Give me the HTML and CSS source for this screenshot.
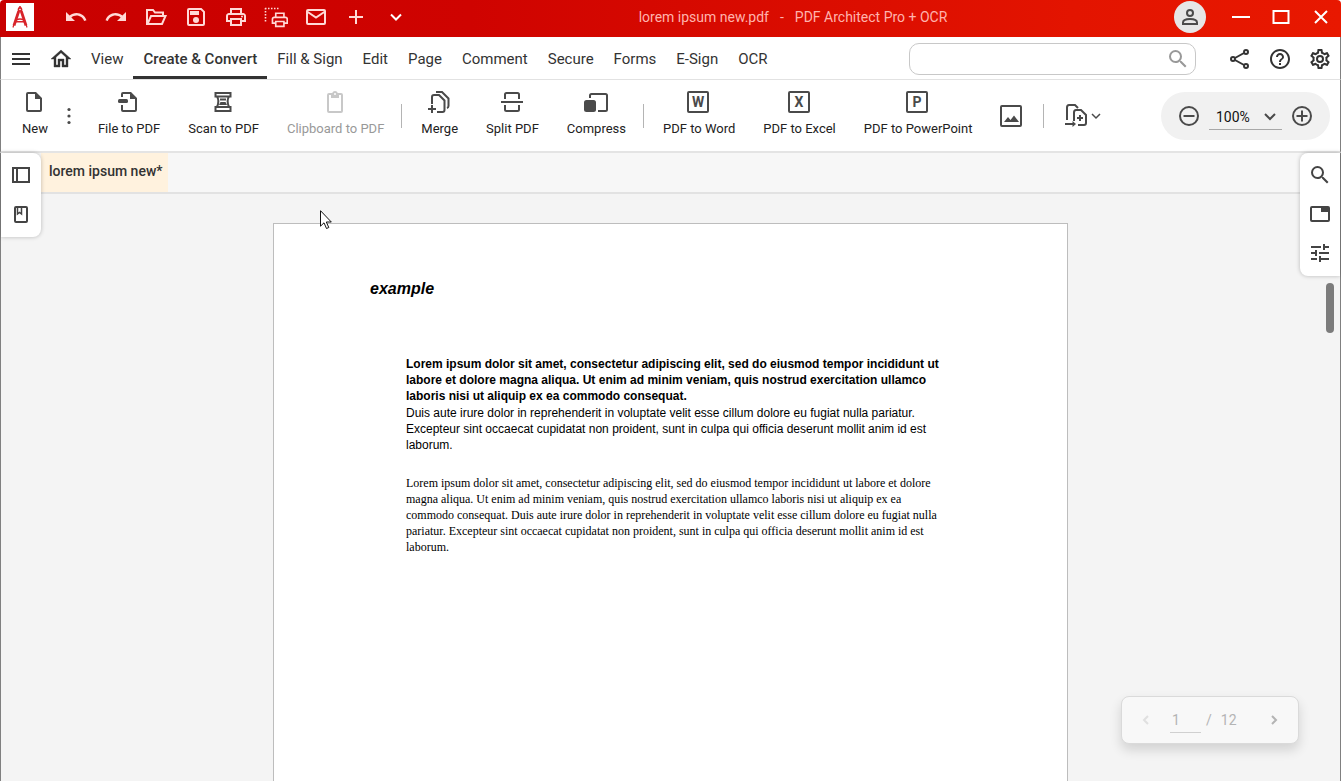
FILE: index.html
```html
<!DOCTYPE html>
<html lang="en">
<head>
<meta charset="utf-8">
<title>lorem ipsum new.pdf - PDF Architect Pro + OCR</title>
<link rel="stylesheet" href="styles.css">
</head>
<body>
<div class="window">
  <header class="titlebar">
    <svg class="logo" viewBox="0 0 28 28" aria-hidden="true">
      <rect width="28" height="28" fill="#fff"/>
      <g fill="none" stroke="#d8232a">
        <circle cx="14" cy="6.5" r="1.6" stroke-width="1.6"/>
        <path d="M14 3v2" stroke-width="1.6"/>
        <path d="M12.8 8 8 22.5M15.2 8 20 22.5" stroke-width="2.8"/>
        <path d="M7.8 21.5 7 24.5M20.2 21.5l.8 3" stroke-width="1.2"/>
        <path d="M10 17.2q4-2.4 8 0M10 18.8h8" stroke-width="1.4"/>
      </g>
    </svg>
    <div class="quick">
      <button aria-label="Undo"><svg viewBox="0 0 24 24"><path d="M12.5 8c-2.65 0-5.05.99-6.9 2.6L2 7v9h9l-3.62-3.62c1.39-1.16 3.16-1.88 5.12-1.88 3.54 0 6.55 2.31 7.6 5.5l2.37-.78C21.08 11.03 17.15 8 12.5 8z"/></svg></button>
      <button aria-label="Redo"><svg viewBox="0 0 24 24"><path d="M18.4 10.6C16.55 8.99 14.15 8 11.5 8c-4.65 0-8.58 3.03-9.96 7.22L3.9 16c1.05-3.19 4.05-5.5 7.6-5.5 1.95 0 3.73.72 5.12 1.88L13 16h9V7l-3.6 3.6z"/></svg></button>
      <button aria-label="Open"><svg viewBox="0 0 24 24" class="line"><path d="M4.500 19H3V5h6l2 2.500h8V11M3.500 19 7 11h14.500L18 19z"/></svg></button>
      <button aria-label="Save"><svg viewBox="0 0 24 24"><path fill-rule="evenodd" d="M5 3h12.500L21 6.500V19a2 2 0 0 1-2 2H5a2 2 0 0 1-2-2V5a2 2 0 0 1 2-2zm0 2v14h14V7.300L16.700 5z"/><path d="M6 6h9v4H6z"/><circle cx="12" cy="15" r="3"/></svg></button>
      <button aria-label="Print"><svg viewBox="0 0 24 24"><path fill-rule="evenodd" d="M19 8h-1V3H6v5H5c-1.660 0-3 1.340-3 3v6h4v4h12v-4h4v-6c0-1.660-1.340-3-3-3zM8 5h8v3H8V5zm8 12v2H8v-4h8v2zm2-2v-2H6v2H4v-4c0-.55.45-1 1-1h14c.55 0 1 .45 1 1v4h-2z"/><circle cx="18" cy="11.500" r="1"/></svg></button>
      <button aria-label="Print area"><svg viewBox="0 0 24 24"><path d="M1 3.500h14M1.500 3v14" fill="none" stroke="currentColor" stroke-width="1.600" stroke-dasharray="1.500 1.500"/><g transform="translate(6 5) scale(.82)"><path fill-rule="evenodd" d="M19 8h-1V3H6v5H5c-1.660 0-3 1.340-3 3v6h4v4h12v-4h4v-6c0-1.660-1.340-3-3-3zM8 5h8v3H8V5zm8 12v2H8v-4h8v2zm2-2v-2H6v2H4v-4c0-.55.45-1 1-1h14c.55 0 1 .45 1 1v4h-2z"/></g></svg></button>
      <button aria-label="Email"><svg viewBox="0 0 24 24" class="line"><rect x="3" y="5" width="18" height="14" rx="1"/><path d="m3 6.500 9 6 9-6"/></svg></button>
      <button aria-label="Add"><svg viewBox="0 0 24 24" class="line"><path d="M12 5v14M5 12h14"/></svg></button>
      <button aria-label="More commands"><svg viewBox="0 0 24 24" class="line bright"><path d="m7 9.500 5 5 5-5"/></svg></button>
    </div>
    <h1 class="title"><span>lorem ipsum new.pdf</span><span>-</span><span>PDF Architect Pro + OCR</span></h1>
    <button class="avatar" aria-label="Account"><svg viewBox="0 0 24 24"><g fill="none" stroke="currentColor" stroke-width="2"><circle cx="12" cy="8" r="3"/><path d="M5 19v-1.500C5 15 9 14 12 14s7 1 7 3.500V19z"/></g></svg></button>
    <div class="controls">
      <button aria-label="Minimize"><svg viewBox="0 0 24 24" class="line"><path d="M3 12h18"/></svg></button>
      <button aria-label="Maximize"><svg viewBox="0 0 24 24" class="line"><path d="M4.500 6h15v12h-15z"/></svg></button>
      <button aria-label="Close"><svg viewBox="0 0 24 24" class="line"><path d="m6 6 12 12M18 6 6 18"/></svg></button>
    </div>
  </header>

  <nav class="menubar">
    <button class="icon" aria-label="Menu"><svg viewBox="0 0 24 24" class="line"><path d="M3 7h18M3 12h18M3 17h18"/></svg></button>
    <button class="icon" aria-label="Home"><svg viewBox="0 0 24 24"><path d="M12 5.690l5 4.500V18h-2v-6H9v6H7v-7.810l5-4.500M12 3L2 12h3v8h6v-6h2v6h6v-8h3L12 3z" stroke="currentColor" stroke-width=".4"/></svg></button>
    <button class="menu">View</button>
    <button class="menu active">Create &amp; Convert</button>
    <button class="menu">Fill &amp; Sign</button>
    <button class="menu">Edit</button>
    <button class="menu">Page</button>
    <button class="menu">Comment</button>
    <button class="menu">Secure</button>
    <button class="menu">Forms</button>
    <button class="menu">E-Sign</button>
    <button class="menu">OCR</button>
    <label class="search">
      <input type="search" aria-label="Search commands">
      <svg viewBox="0 0 24 24"><path d="M15.500 14h-.79l-.28-.27A6.471 6.471 0 0 0 16 9.500 6.500 6.500 0 1 0 9.500 16c1.610 0 3.090-.59 4.230-1.570l.27.28v.79l5 4.990L20.490 19l-4.990-5zm-6 0C7.010 14 5 11.990 5 9.500S7.010 5 9.500 5 14 7.010 14 9.500 11.990 14 9.500 14z"/></svg>
    </label>
    <button class="icon" aria-label="Share"><svg viewBox="0 0 24 24" class="line"><circle cx="5" cy="12" r="2"/><circle cx="18" cy="5" r="2"/><circle cx="18" cy="19" r="2"/><path d="m7 11 9-5M7 13l9 5"/></svg></button>
    <button class="icon" aria-label="Help"><svg viewBox="0 0 24 24"><path fill-rule="evenodd" d="M11 18h2v-2h-2v2zm1-16C6.480 2 2 6.480 2 12s4.480 10 10 10 10-4.480 10-10S17.520 2 12 2zm0 18c-4.410 0-8-3.590-8-8s3.590-8 8-8 8 3.590 8 8-3.590 8-8 8zm0-14c-2.210 0-4 1.790-4 4h2c0-1.100.9-2 2-2s2 .9 2 2c0 2-3 1.750-3 5h2c0-2.250 3-2.500 3-5 0-2.210-1.790-4-4-4z"/></svg></button>
    <button class="icon" aria-label="Settings"><svg viewBox="0 0 24 24"><path fill-rule="evenodd" d="M19.430 12.980c.04-.32.07-.64.07-.98 0-.34-.03-.66-.07-.98l2.110-1.650c.19-.15.24-.42.12-.64l-2-3.460a.5.5 0 0 0-.61-.22l-2.490 1c-.52-.4-1.080-.73-1.690-.98l-.38-2.650A.488.488 0 0 0 14 2h-4c-.25 0-.46.18-.49.42l-.38 2.650c-.61.25-1.170.59-1.690.98l-2.490-1a.5.5 0 0 0-.61.22l-2 3.460c-.13.22-.07.49.12.64l2.110 1.650c-.04.32-.07.65-.07.98s.03.66.07.98l-2.110 1.650c-.19.15-.24.42-.12.64l2 3.460c.12.22.39.3.61.22l2.490-1c.52.4 1.080.73 1.690.98l.38 2.650c.03.24.24.42.49.42h4c.25 0 .46-.18.49-.42l.38-2.650c.61-.25 1.170-.59 1.690-.98l2.490 1a.5.5 0 0 0 .61-.22l2-3.460c.12-.22.07-.49-.12-.64l-2.110-1.650zm-1.980-1.710c.04.31.05.52.05.73s-.02.43-.05.73l-.14 1.130.89.7 1.080.84-.7 1.210-1.270-.51-1.040-.42-.9.68c-.43.32-.84.56-1.250.73l-1.060.43-.16 1.130-.2 1.350h-1.400l-.19-1.350-.16-1.130-1.060-.43c-.43-.18-.83-.41-1.230-.71l-.91-.7-1.060.43-1.270.51-.7-1.210 1.080-.84.89-.7-.14-1.130c-.03-.31-.05-.54-.05-.74s.02-.43.05-.73l.14-1.130-.89-.7-1.080-.84.7-1.210 1.270.51 1.040.42.9-.68c.43-.32.84-.56 1.250-.73l1.060-.43.16-1.130.2-1.350h1.390l.19 1.350.16 1.130 1.060.43c.43.18.83.41 1.230.71l.91.7 1.060-.43 1.270-.51.7 1.210-1.070.85-.89.7.14 1.130zM12 8a4 4 0 1 0 0 8 4 4 0 0 0 0-8zm0 6a2 2 0 1 1 0-4 2 2 0 0 1 0 4z"/></svg></button>
  </nav>

  <div class="toolbar">
    <button class="tool"><svg viewBox="0 0 24 24"><path fill-rule="evenodd" d="M5 2h8l6 6v12a2 2 0 0 1-2 2H5a2 2 0 0 1-2-2V4a2 2 0 0 1 2-2zm0 2v16h12V9h-5V4z"/></svg>New</button>
    <button class="more" aria-label="More new options"><svg viewBox="0 0 14 24"><circle cx="7" cy="5.500" r="1.600"/><circle cx="7" cy="12" r="1.600"/><circle cx="7" cy="18.500" r="1.600"/></svg></button>
    <button class="tool"><svg viewBox="0 0 24 24"><path d="M4 7V4a2 2 0 0 1 2-2h8l6 6v12a2 2 0 0 1-2 2H6a2 2 0 0 1-2-2v-5h2v5h12V9h-5V4H6v3z"/><rect x="1" y="9" width="10" height="4" rx="1.500"/></svg>File to PDF</button>
    <button class="tool"><svg viewBox="0 0 24 24" class="line"><path d="M3.500 3h15v3.500h-15zM3.500 17h15v4h-15zM5 6.500c2 3 2 6 0 10.500M17 6.500c-2 3-2 6 0 10.500M8 9.500h6"/><path d="M8.500 12h5l1.500 3H7z" fill="currentColor" stroke="none"/></svg>Scan to PDF</button>
    <button class="tool" disabled><svg viewBox="0 0 24 24" class="clip"><path fill-rule="evenodd" d="M5 3h3.200a3 3 0 0 1 5.600 0H17a2 2 0 0 1 2 2v16a2 2 0 0 1-2 2H5a2 2 0 0 1-2-2V5a2 2 0 0 1 2-2zm0 2v16h12V5h-2v3H7V5zm6-2a1 1 0 1 0 0 2 1 1 0 0 0 0-2z"/></svg>Clipboard to PDF</button>
    <span class="divider"></span>
    <button class="tool"><svg viewBox="0 0 24 24" class="line"><path d="M4 14V7q0-2 2-2h5l5.500 5.500V20q0 2-2 2H9M8 2h6l6.500 6.500V16q0 1.500-1.500 2M4 15v8M0 19h8"/></svg>Merge</button>
    <button class="tool"><svg viewBox="0 0 24 24" class="line"><path d="M5 9V4.500A1.500 1.500 0 0 1 6.500 3h11A1.500 1.500 0 0 1 19 4.500V9M1 12h22M5 15v4.500A1.500 1.500 0 0 0 6.500 21h11a1.500 1.500 0 0 0 1.500-1.500V15"/></svg>Split PDF</button>
    <button class="tool"><svg viewBox="0 0 24 24"><rect x="0" y="10" width="12" height="12" rx="2.500"/><path class="outline" d="M6 8V5.500A1.500 1.500 0 0 1 7.500 4h14A1.500 1.500 0 0 1 23 5.500v14a1.500 1.500 0 0 1-1.500 1.500H14"/></svg>Compress</button>
    <span class="divider"></span>
    <button class="tool"><svg viewBox="0 0 24 24" class="letter" aria-hidden="true"><rect class="outline" x="1" y="2" width="20" height="20" rx="1"/><text x="11" y="17">W</text></svg>PDF to Word</button>
    <button class="tool"><svg viewBox="0 0 24 24" class="letter" aria-hidden="true"><rect class="outline" x="1" y="2" width="20" height="20" rx="1"/><text x="11" y="17">X</text></svg>PDF to Excel</button>
    <button class="tool"><svg viewBox="0 0 24 24" class="letter" aria-hidden="true"><rect class="outline" x="1" y="2" width="20" height="20" rx="1"/><text x="11" y="17">P</text></svg>PDF to PowerPoint</button>
    <button class="tool bare" aria-label="PDF to image"><svg viewBox="0 0 24 24"><rect class="outline" x="2" y="2" width="20" height="20" rx="1"/><path d="m5 18 4-5 2.500 3L15 11.500l5 6.500z"/></svg></button>
    <span class="divider"></span>
    <button class="batch" aria-label="Batch convert"><svg viewBox="0 0 24 24" class="line"><path d="M3 16V3.500Q3 1 5 1h6l3 3M1 20h8M10 17V8.500Q10 6 12 6h5l5 5v8q0 2-2 2h-6M16 11v6M13 14h6"/><path d="m8.500 17 3.500 3-3.500 3z" fill="currentColor" stroke="none"/></svg><svg viewBox="0 0 12 24" class="small"><path d="m2 10 4 4 4-4"/></svg></button>
    <div class="zoom">
      <button aria-label="Zoom out"><svg viewBox="0 0 24 24" class="line"><circle cx="12" cy="12" r="9"/><path d="M6.500 12h11"/></svg></button>
      <label class="level"><select aria-label="Zoom level"><option>100%</option></select><svg viewBox="0 0 16 16" class="line"><path d="m3 5 5 5 5-5"/></svg></label>
      <button aria-label="Zoom in"><svg viewBox="0 0 24 24" class="line"><circle cx="12" cy="12" r="9"/><path d="M6.500 12h11M12 6.500v11"/></svg></button>
    </div>
  </div>

  <main class="workspace">
    <div class="tabs"><button class="tab">lorem ipsum new*</button></div>
    <div class="canvas">
      <article class="page">
        <h2>example</h2>
        <div class="copy">
          <p class="lead">Lorem ipsum dolor sit amet, consectetur adipiscing elit, sed do eiusmod tempor incididunt ut<br>labore et dolore magna aliqua. Ut enim ad minim veniam, quis nostrud exercitation ullamco<br>laboris nisi ut aliquip ex ea commodo consequat.</p>
          <p class="sans">Duis aute irure dolor in reprehenderit in voluptate velit esse cillum dolore eu fugiat nulla pariatur.<br>Excepteur sint occaecat cupidatat non proident, sunt in culpa qui officia deserunt mollit anim id est<br>laborum.</p>
          <p class="serif">Lorem ipsum dolor sit amet, consectetur adipiscing elit, sed do eiusmod tempor incididunt ut labore et dolore<br>magna aliqua. Ut enim ad minim veniam, quis nostrud exercitation ullamco laboris nisi ut aliquip ex ea<br>commodo consequat. Duis aute irure dolor in reprehenderit in voluptate velit esse cillum dolore eu fugiat nulla<br>pariatur. Excepteur sint occaecat cupidatat non proident, sunt in culpa qui officia deserunt mollit anim id est<br>laborum.</p>
        </div>
      </article>
    </div>

    <aside class="panel left">
      <button aria-label="Pages panel"><svg viewBox="0 0 24 24" class="line"><path d="M4 5h16v14H4zM8 5v14"/></svg></button>
      <button aria-label="Bookmarks panel"><svg viewBox="0 0 24 24" class="line"><rect x="6" y="5" width="12" height="15" rx="1"/><path d="M8.500 5v7l2-1.500 2 1.500V5" stroke-width="1.500"/></svg></button>
    </aside>
    <aside class="panel right">
      <button aria-label="Find"><svg viewBox="0 0 24 24"><path d="M15.500 14h-.79l-.28-.27A6.471 6.471 0 0 0 16 9.500 6.500 6.500 0 1 0 9.500 16c1.610 0 3.090-.59 4.230-1.570l.27.28v.79l5 4.990L20.490 19l-4.990-5zm-6 0C7.010 14 5 11.990 5 9.500S7.010 5 9.500 5 14 7.010 14 9.500 11.990 14 9.500 14z"/></svg></button>
      <button aria-label="Open in tab"><svg viewBox="0 0 24 24"><rect class="outline" x="3" y="5" width="18" height="14" rx="1"/><path d="M13 5h8v5h-8z"/></svg></button>
      <button aria-label="Properties"><svg viewBox="0 0 24 24"><path d="M3 17v2h6v-2H3zM3 5v2h10V5H3zm10 16v-2h8v-2h-8v-2h-2v6h2zM7 9v2H3v2h4v2h2V9H7zm14 4v-2H11v2h10zm-6-4h2V7h4V5h-4V3h-2v6z"/></svg></button>
    </aside>
    <div class="thumb"></div>
    <div class="pager">
      <button aria-label="Previous page" disabled><svg viewBox="0 0 16 16" class="line"><path d="M10 4 6 8l4 4"/></svg></button>
      <input type="text" value="1" aria-label="Page number"><span>/</span><span class="total">12</span>
      <button aria-label="Next page"><svg viewBox="0 0 16 16" class="line"><path d="m6 4 4 4-4 4"/></svg></button>
    </div>
    <svg class="pointer" viewBox="0 0 12 20" aria-hidden="true"><path d="M.5.7v15.500l3.500-3.400 2.500 5.700 2.300-1-2.500-5.500h5z" fill="#fff" stroke="#111"/></svg>
  </main>
</div>
</body>
</html>
```
FILE: styles.css
```css
* { box-sizing: border-box; }
body { margin: 0; background: #fff; color: #333; font-family: Roboto, sans-serif; }
button { display: flex; align-items: center; justify-content: center; margin: 0; padding: 0; border: 0; background: none; color: inherit; font: inherit; }
input, select { margin: 0; padding: 0; border: 0; outline: 0; background: none; font: inherit; color: inherit; appearance: none; }
svg { display: block; width: 24px; height: 24px; flex: none; fill: currentColor; }
.line, .outline { fill: none; stroke: currentColor; stroke-width: 2; }

.window { display: flex; flex-direction: column; height: 100vh; margin-right: 1px; overflow: hidden; }

.titlebar { display: flex; flex: none; height: 37px; padding: 0 0 3px 6px; border-radius: 4px 4px 0 0; background: linear-gradient(90deg, #c80000, #cf0300 35%, #e31400 80%, #e81800); color: #fff; }
.logo { width: 28px; height: 28px; margin: 3px 22px 0 0; }
.quick { display: flex; color: #ffd9d6; }
.quick button, .controls button { width: 40px; }
.bright { color: #fff; }
.title { display: flex; flex: 1; align-items: center; justify-content: center; gap: 11px; margin: 0; padding-bottom: 1px; font-size: 14px; font-weight: 400; color: #ffb3ad; white-space: nowrap; }
.avatar { width: 32px; height: 32px; margin: 1px 15px 0 4px; border-radius: 50%; background: #e6e6e6; color: #4a4a4a; }
.controls { display: flex; }

.menubar { display: flex; flex: none; height: 43px; border: solid #e2e2e2; border-width: 0 0 1px; border-left: 1px solid #808080; border-right: 1px solid #808080; background: #fff; }
.menubar .icon { width: 40px; padding-top: 2px; }
.menu { padding: 5px 10px 0; border-bottom: 3px solid transparent; font-size: 15px; white-space: nowrap; }
.menu.active { border-color: #333; font-weight: 500; }
.search { display: flex; align-items: center; width: 287px; height: 32px; margin: 6px 24px 0 auto; padding: 0 5px 0 12px; border: 1px solid #c8c8c8; border-radius: 10px; color: #999; }
.search input { flex: 1; min-width: 0; font-size: 14px; }

.toolbar { display: flex; flex: none; align-items: center; height: 73px; padding: 0 10px 0 7px; border: solid #e4e4e4; border-width: 0 0 2px; border-left: 1px solid #808080; border-right: 1px solid #808080; background: #fff; font-size: 13px; white-space: nowrap; }
.toolbar svg { color: #4a4a4a; }
.tool { flex-direction: column; gap: 7px; margin-bottom: 5px; padding: 0 14px; color: #222; font-size: 13px; line-height: 16px; }
.tool:disabled { color: #999; }
.toolbar .clip { color: #c8c8c8; }
.tool.bare { margin-bottom: 0; padding: 0 13px; }
.letter text { font: 700 14px Roboto, sans-serif; text-anchor: middle; }
.more { width: 14px; margin-right: 8px; }
.more svg { width: 14px; }
.divider { width: 1px; height: 24px; margin: 0 5px 0 3px; background: #b4b4b4; }
.bare + .divider { margin: 0 20px 0 7px; }
.batch { gap: 2px; }
.toolbar .small { width: 12px; fill: none; stroke: currentColor; stroke-width: 1.5; }
.zoom { display: flex; align-items: center; justify-content: space-between; width: 169px; height: 48px; margin-left: auto; padding: 0 16px; border-radius: 24px; background: #f1f1f1; }
.level { display: flex; align-items: center; justify-content: space-between; width: 73px; height: 28px; padding: 4px 4px 0 7px; border-bottom: 1px solid #a8a8a8; color: #111; font-size: 14px; }
.level svg { width: 16px; height: 16px; }

.workspace { position: relative; flex: 1; min-height: 0; display: flex; flex-direction: column; border: solid #808080; border-width: 0 1px; background: #f4f4f4; }
.tabs { display: flex; flex: none; height: 41px; padding-left: 40px; border-bottom: 2px solid #e2e2e2; background: #f7f7f7; }
.tab { padding: 0 5px 4px 8px; background: #fff2de; font-size: 14px; font-weight: 500; }
.canvas { flex: 1; min-height: 0; display: flex; justify-content: center; padding-top: 29px; overflow: hidden; }
.page { width: 795px; height: 1124px; padding: 55px 96px; border: 1px solid #bdbdbd; background: #fff; color: #000; white-space: nowrap; }
.page h2 { margin: 0 0 57px; font: italic 700 16px/20px "Liberation Sans", Arial, sans-serif; }
.copy { padding-left: 36px; }
.copy p { margin: 0 0 1px; }
.lead { font: 700 12px/16px "Liberation Sans", Arial, sans-serif; }
.sans { font: 12px/16px "Liberation Sans", Arial, sans-serif; }
.copy .serif { margin-top: 22px; font: 12px/16px "Liberation Serif", "Times New Roman", serif; }

.panel { position: absolute; top: 0; padding: 2px 0 4px; background: #fff; color: #444; box-shadow: 0 0 4px rgba(0, 0, 0, .25); }
.panel button { width: 40px; height: 39px; }
.left { left: 0; border-radius: 0 8px 8px 0; }
.right { right: 0; border-radius: 8px 0 0 8px; }
.thumb { position: absolute; right: 6px; top: 130px; width: 8px; height: 50px; border-radius: 4px; background: #7c7c7c; }
.pager { position: absolute; right: 41px; bottom: 37px; display: flex; align-items: center; width: 178px; height: 48px; padding: 0 16px; border: 1px solid #dadada; border-radius: 8px; background: #f8f8f8; box-shadow: 0 6px 12px rgba(0, 0, 0, .14); color: #b4b4b4; font-size: 14px; }
.pager svg { width: 16px; height: 16px; }
.pager button:disabled { color: #e0e0e0; }
.pager input { width: 31px; height: 26px; margin: 0 5px 0 16px; padding-left: 2px; border-bottom: 1px solid #d0d0d0; }
.total { margin: 0 auto 0 9px; }
.pointer { position: absolute; left: 319px; top: 57px; width: 12px; height: 20px; }
```
